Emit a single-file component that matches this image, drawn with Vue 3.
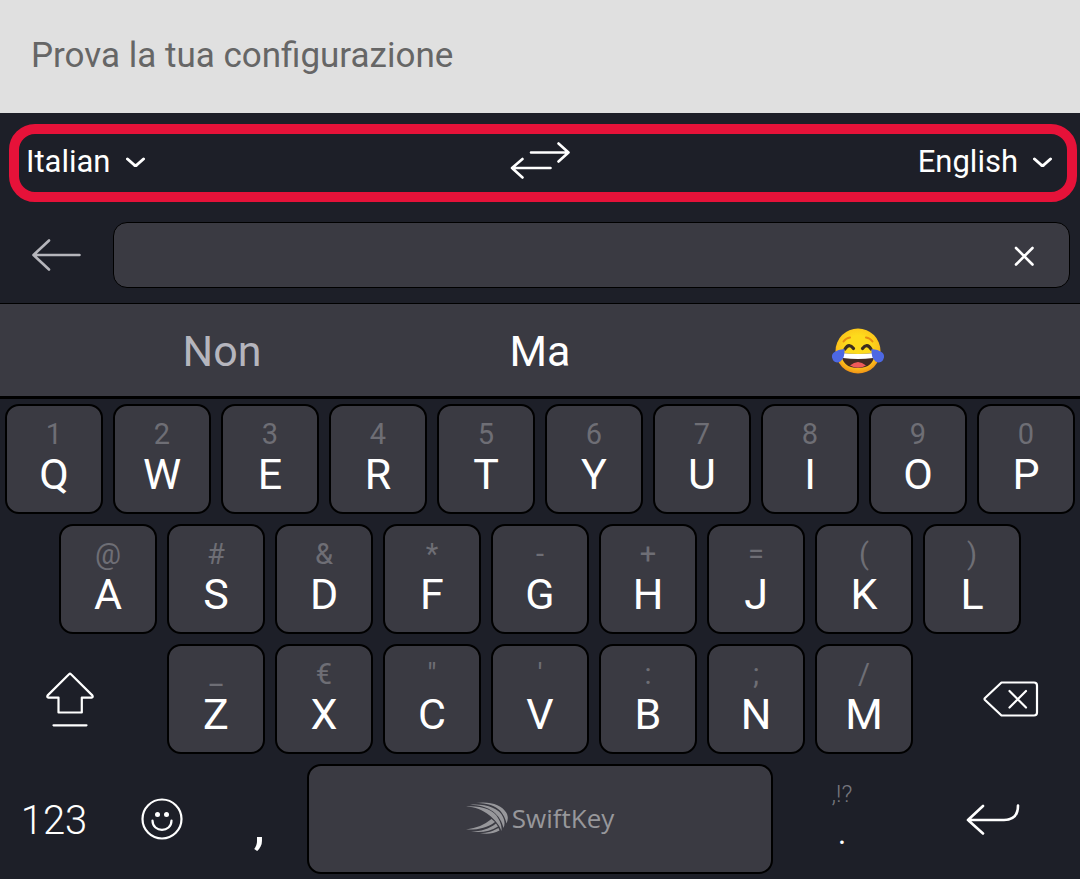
<script setup>
import { ref } from 'vue'

const trial = ref('')
const query = ref('')
const source = ref('Italian')
const target = ref('English')
const languages = ['Italian', 'English']

const pair = (letters, hints) => [...letters].map((letter, i) => ({ letter, hint: hints[i] }))
const topRow = pair('QWERTYUIOP', '1234567890')
const homeRow = pair('ASDFGHJKL', '@#&*-+=()')
const bottomRow = pair('ZXCVBNM', '_€"\':;/')

function swap() {
  const previous = source.value
  source.value = target.value
  target.value = previous
}
</script>

<template>
  <main class="screen">
    <header class="trial">
      <input v-model="trial" class="trial-input" type="text" placeholder="Prova la tua configurazione" aria-label="Prova la tua configurazione" />
    </header>

    <section class="languages" aria-label="Languages">
      <label class="language">
        <select v-model="source" class="language-select" aria-label="Source language">
          <option v-for="name in languages" :key="name">{{ name }}</option>
        </select>
        <svg class="chevron" width="20" height="12" viewBox="0 0 20 12"><path d="M1.500 3L8.300 9Q9.500 10 10.700 9L17.500 3" /></svg>
      </label>
      <button class="plain" type="button" aria-label="Swap languages" @click="swap">
        <svg class="line swap" width="60" height="38" viewBox="0 0 60 38">
          <path d="M21 10.500H58.500M48.500 1.500L58.500 10.500L48.500 19.500M40.500 26H2M12.500 17L2 26L12.500 35.500" />
        </svg>
      </button>
      <label class="language language-end">
        <select v-model="target" class="language-select" aria-label="Target language">
          <option v-for="name in languages" :key="name">{{ name }}</option>
        </select>
        <svg class="chevron" width="20" height="12" viewBox="0 0 20 12"><path d="M1.500 3L8.300 9Q9.500 10 10.700 9L17.500 3" /></svg>
      </label>
    </section>

    <section class="search">
      <button class="plain back" type="button" aria-label="Back">
        <svg class="line muted" width="50" height="32" viewBox="0 0 50 32"><path d="M47.500 16H2M17 1.500L1.500 16L17 30.500" /></svg>
      </button>
      <div class="search-box">
        <input v-model="query" class="search-input" type="text" aria-label="Text to translate" />
        <button class="plain clear" type="button" aria-label="Clear" @click="query = ''">
          <svg class="line" width="20" height="20" viewBox="0 0 20 20"><path d="M2 2L18.500 18.500M18.500 2L2 18.500" /></svg>
        </button>
      </div>
    </section>

    <nav class="suggestions" aria-label="Suggestions">
      <button class="plain suggestion dim" type="button">Non</button>
      <button class="plain suggestion" type="button">Ma</button>
      <button class="plain suggestion" type="button" aria-label="Face with tears of joy">
        <svg width="54" height="48" viewBox="0 0 54 48">
          <defs>
            <radialGradient id="face" cx="0.5" cy="0.4" r="0.62">
              <stop offset="0.4" stop-color="#fddb1c" />
              <stop offset="0.75" stop-color="#fcc21b" />
              <stop offset="1" stop-color="#ef8b16" />
            </radialGradient>
          </defs>
          <circle cx="27" cy="24" r="22.500" fill="url(#face)" />
          <path d="M12.500 14.500Q15 11 19 10.500M35 10.500Q39 11 41.500 14.500" fill="none" stroke="#e58a12" stroke-width="2" stroke-linecap="round" />
          <path d="M14 22Q18 15.500 22.500 21.500M31.500 21.500Q36 15.500 40 22" fill="none" stroke="#3d2e20" stroke-width="3.200" stroke-linecap="round" />
          <path d="M10.500 26Q27 28 43.500 26Q43 41 27 41Q11 41 10.500 26Z" fill="#402a24" />
          <path d="M10.500 26Q27 28 43.500 26Q43.500 29 42 31Q27 33 12 31Q10.500 29 10.500 26Z" fill="#fff" />
          <path d="M19 38.500Q27 31.500 35 38.500Q27 43 19 38.500Z" fill="#ef5a5a" />
          <path d="M13.500 22Q0 23.500 1 30.500Q3 37.500 9.500 34.500Q14 31 13.500 22ZM40.500 22Q54 23.500 53 30.500Q51 37.500 44.500 34.500Q40 31 40.500 22Z" fill="#4d68e3" />
        </svg>
      </button>
    </nav>

    <section class="keyboard" aria-label="Keyboard">
      <div class="row">
        <button v-for="key in topRow" :key="key.letter" class="key" type="button">
          <span class="hint">{{ key.hint }}</span><span class="letter">{{ key.letter }}</span>
        </button>
      </div>
      <div class="row row-home">
        <button v-for="key in homeRow" :key="key.letter" class="key" type="button">
          <span class="hint">{{ key.hint }}</span><span class="letter">{{ key.letter }}</span>
        </button>
      </div>
      <div class="row">
        <button class="plain shift" type="button" aria-label="Shift">
          <svg class="line thin" width="50" height="56" viewBox="0 0 50 56">
            <path d="M24 3.200Q25 2.300 26 3.200L47.300 24.400Q48.500 26.400 46.500 26.600H36.800V41.500H13.500V26.600H3.500Q1.500 26.400 2.700 24.400ZM8.500 54.300H41.500" />
          </svg>
        </button>
        <button v-for="key in bottomRow" :key="key.letter" class="key" type="button">
          <span class="hint">{{ key.hint }}</span><span class="letter">{{ key.letter }}</span>
        </button>
        <button class="plain backspace" type="button" aria-label="Backspace">
          <svg class="line thin" width="56" height="36" viewBox="0 0 56 36">
            <path d="M18.500 1.500H51Q54 1.500 54 4.500V31.500Q54 34.500 51 34.500H18.500L2 19Q1 18 2 17ZM26.500 10L43 26.500M43 10L26.500 26.500" />
          </svg>
        </button>
      </div>
      <div class="row row-space">
        <button class="plain numbers" type="button">123</button>
        <button class="plain" type="button" aria-label="Emoji">
          <svg class="line thin" width="42" height="42" viewBox="0 0 42 42">
            <circle cx="21" cy="21" r="19.500" />
            <path d="M11.500 22.500C11.500 35 30.500 35 30.500 22.500" />
            <g class="solid"><circle cx="16.500" cy="16.500" r="2.500" /><circle cx="25.500" cy="16.500" r="2.500" /></g>
          </svg>
        </button>
        <button class="plain comma" type="button">,</button>
        <button class="key space" type="button">
          <svg class="mark" width="42" height="32" viewBox="0 0 42 32">
            <path d="M0 4.500C15 3.500 28 8 32 16C35 21 36 25 35.500 29C33 22 28 17 23 13C17 8 9 5 0 4.500Z" />
            <path d="M4 2.800C19 1.500 33 6 37 15C39 19 39 23 37.500 26C36 20 33 14 27 9.500C21 5 13 3 4 2.800Z" />
            <path d="M10 1C24 -1 36 3 40.500 11C42.500 15 42 18 40.500 21.500C39 15 36 9 30 5.500C24 2 17 1.200 10 1Z" />
            <path d="M0 27.500C11 26 18 23 25.500 17L29 20C21 26 12 28 0 27.500Z" />
            <path d="M5 29.500C15 29.500 23 27 30 21.500L32 24.500C24 29.500 15 31 5 29.500Z" />
            <path d="M14 31C22 31 27 29 32.500 26L33.500 28.500C27 32 20 32.500 14 31Z" />
          </svg>
          <span class="brand">SwiftKey</span>
        </button>
        <button class="plain period" type="button">
          <span class="marks">,!?</span><span class="dot">.</span>
        </button>
        <button class="plain enter" type="button" aria-label="Enter">
          <svg class="line" width="54" height="32" viewBox="0 0 54 32"><path d="M52 2.500C52 12 48 17 38 17H2M17 3L2 17L17 30.500" /></svg>
        </button>
      </div>
    </section>
  </main>
</template>

<style>
body {
  margin: 0;
  background: #1d1f28;
}
</style>

<style scoped>
.screen {
  min-height: 100vh;
  background: #1d1f28;
  color: #fff;
  font-family: Roboto, "Liberation Sans", sans-serif;
}
.screen *,
.screen {
  box-sizing: border-box;
}
button,
input,
select {
  min-width: 0;
  margin: 0;
  font-family: inherit;
  color: inherit;
}
svg {
  display: block;
  flex: none;
}
.trial {
  background: #e0e0e0;
}
.trial-input {
  display: block;
  width: 100%;
  height: 113px;
  padding: 0 31px 2px;
  border: 0;
  background: transparent;
  color: #333;
  font-size: 35px;
}
.trial-input::placeholder {
  color: #666;
  opacity: 1;
}
.languages {
  display: grid;
  grid-template-columns: 1fr auto 1fr;
  align-items: center;
  height: 78px;
  margin: 11px 3px 0 9px;
  padding: 0 14px 2px 7px;
  border: 10px solid #e61239;
  border-radius: 26px;
}
.language {
  display: flex;
  align-items: center;
  gap: 15px;
}
.language-end {
  justify-content: flex-end;
}
.language-select {
  appearance: none;
  field-sizing: content;
  padding: 0;
  border: 0;
  background: transparent;
  font-size: 31px;
  line-height: 36px;
}
.language-select option {
  background: #3a3a42;
}
.plain {
  display: flex;
  align-items: center;
  justify-content: center;
  padding: 0;
  border: 0;
  background: transparent;
}
.line,
.chevron {
  fill: none;
  stroke: #fff;
  stroke-width: 2.6;
  stroke-linecap: round;
  stroke-linejoin: round;
}
.chevron {
  stroke-width: 3;
}
.swap {
  margin-bottom: 2px;
}
.thin {
  stroke-width: 2.2;
}
.muted {
  stroke: #b5b5bb;
}
.solid {
  fill: #fff;
  stroke: none;
}
.search {
  display: flex;
  padding: 20px 10px 15px 0;
}
.back {
  width: 113px;
}
.search-box {
  display: flex;
  flex: 1;
  align-items: center;
  height: 66px;
  padding-right: 35px;
  border: 1px solid #000;
  border-radius: 14px;
  background: #3a3a42;
}
.search-input {
  flex: 1;
  height: 100%;
  padding: 0 16px;
  border: 0;
  background: transparent;
  font-size: 31px;
}
.clear {
  height: 100%;
  padding-top: 2px;
}
.suggestions {
  display: grid;
  grid-template-columns: repeat(3, 1fr);
  height: 96px;
  padding: 2px 63px 0;
  border-top: 1px solid #000;
  border-bottom: 3px solid #000;
  background: #3a3a42;
}
.suggestion {
  font-size: 43px;
}
.dim {
  color: #b5b5bd;
}
.keyboard {
  display: grid;
  gap: 10px;
  padding: 5px 0;
}
.row {
  display: grid;
  grid-template-columns: repeat(20, 1fr);
  height: 110px;
}
.row-home {
  padding: 0 5%;
  grid-template-columns: repeat(18, 1fr);
}
.row-space {
  grid-template-columns: 108fr 108fr 86fr 476fr 128fr 174fr;
}
.key {
  display: flex;
  grid-column: span 2;
  flex-direction: column;
  align-items: center;
  gap: 2px;
  margin: 0 5px;
  padding: 12px 0 0;
  border: 2px solid #000;
  border-radius: 14px;
  background: #3a3a42;
}
.hint {
  color: #6e6e75;
  font-size: 29px;
  line-height: 32px;
}
.letter {
  font-size: 43px;
  line-height: 44px;
}
.shift {
  grid-column: span 3;
  padding-right: 22px;
}
.backspace {
  grid-column: span 3;
  padding-left: 24px;
}
.numbers {
  padding-top: 2px;
  font-size: 40px;
  font-weight: 300;
}
.comma {
  padding-top: 10px;
  font-size: 56px;
}
.space {
  grid-column: auto;
  flex-direction: row;
  justify-content: center;
  gap: 4px;
  padding: 0 0 2px;
}
.mark {
  fill: #97979b;
}
.brand {
  color: #97979b;
  font-family: "Open Sans", "Noto Sans", sans-serif;
  font-size: 26px;
  line-height: 32px;
}
.period {
  flex-direction: column;
  justify-content: flex-start;
  gap: 12px;
  padding-top: 16px;
  font-weight: 300;
}
.marks {
  color: #77777e;
  font-size: 24px;
  line-height: 28px;
}
.dot {
  font-size: 31px;
  font-weight: 400;
  line-height: 28px;
}
</style>
